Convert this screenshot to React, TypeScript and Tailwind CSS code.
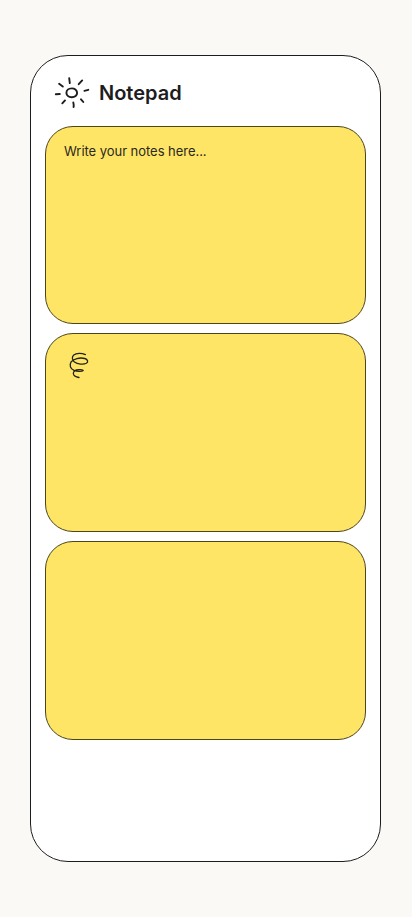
function SunIcon() {
  return (
    <svg className="h-10 w-11 shrink-0" viewBox="0 0 44 40" fill="none" stroke="#1d1d1f" strokeWidth="1.9" strokeLinecap="round" strokeLinejoin="round">
      <path d="M21.4 16.4C18.5 16.5 16.4 18.4 16.4 20.9C16.5 23.6 18.8 25.3 21.8 25.2C24.9 25.2 27.2 23.4 27.1 20.8C27 18.2 24.6 16.2 21.4 16.4Z" />
      <path d="M19.2 6.1L19.8 11.1M28.7 12.2L32.2 8.4M34.4 18.8L38.3 17.8M31 27.3L33.3 30M23.3 30.4Q23.9 32.5 23.6 35M15 28.4L12.3 31.3M5.8 22.2L9.8 22M9.1 11.8L12.8 14.6" />
    </svg>
  );
}

function Squiggle() {
  return (
    <svg className="h-9 w-9" viewBox="0 0 36 36" fill="none" stroke="#24231b" strokeWidth="1.3" strokeLinecap="round" strokeLinejoin="round">
      <path d="M23.4 8.6C19.5 7 14.3 7 11.8 9C9.6 10.9 10 14 12.5 16C15.5 18.2 21.5 18.8 24.3 17.3C26.7 15.9 25.7 13.3 22.8 12.5C18 11.2 11.2 12.8 9.1 15.9C7.1 19.2 8.3 22.9 12 24.4C15 25.6 20 25.7 21.2 24.6C21.3 23.7 17 23.3 14.4 24C11.6 24.8 10.8 27 11.7 28.8C12.6 30.5 14.8 31.3 17 31.5" />
    </svg>
  );
}

const card = "shrink-0 rounded-[28px] border border-[#4b451e] bg-[#ffe566]";

export default function App() {
  return (
    <main className="h-[917px] w-full bg-[#faf9f5] pl-[30px] pt-[55px] font-['Inter',sans-serif] text-[#1d1d1f]">
      <section className="flex h-[807px] w-[351px] flex-col rounded-[38px] border border-[#1d1d1f] bg-white px-[14px]">
        <header className="flex h-[70px] shrink-0 items-start pl-[5px] pt-4">
          <SunIcon />
          <h1 className="ml-[5px] mt-[6px] text-[20px] font-semibold leading-[30px]">Notepad</h1>
        </header>
        <div className="flex flex-col gap-[9px]">
          <div className={`${card} h-[198px] px-[18px] pt-[14px]`}>
            <p className="text-[13px] leading-5 tracking-[-0.04px] text-[#29281f]">Write your notes here...</p>
          </div>
          <div className={`${card} h-[199px] pl-4 pt-3`}>
            <Squiggle />
          </div>
          <div className={`${card} h-[199px]`} />
        </div>
      </section>
    </main>
  );
}
